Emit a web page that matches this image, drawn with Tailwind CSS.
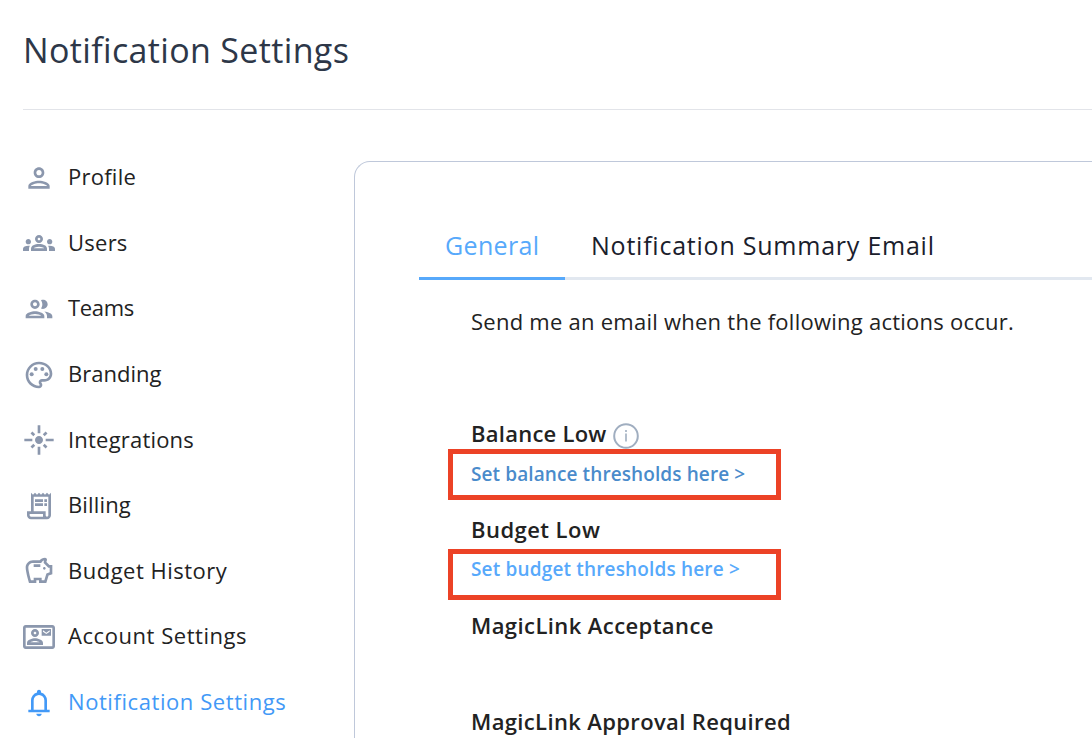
<!DOCTYPE html>
<html lang="en">
<head>
    <meta charset="UTF-8">
    <meta name="viewport" content="width=device-width, initial-scale=1.0">
    <title>Notification Settings</title>
    <script src="https://cdn.jsdelivr.net/npm/@tailwindcss/browser@4"></script>
</head>
<body class="bg-white h-screen flex flex-col overflow-hidden font-['Open_Sans',sans-serif] text-[#222222] whitespace-nowrap">
    <header class="ml-[23px] h-[110px] shrink-0 border-b border-[#e2e4e9] pt-[26px]">
        <h1 class="text-[34px] leading-[48px] tracking-[0.35px] text-[#2d3748]">Notification Settings</h1>
    </header>

    <div class="flex grow">
        <!-- Sidebar -->
        <nav class="w-[354px] shrink-0 pl-[23px] pt-[35px] text-[22px]">
            <a href="#" class="flex items-center gap-[13px] h-[65.6px]">
                <svg class="size-8 shrink-0 fill-[#8b97ad]" viewBox="0 0 24 24"><path d="M12 6c1.1 0 2 .9 2 2s-.9 2-2 2-2-.9-2-2 .9-2 2-2m0 10c2.7 0 5.8 1.29 6 2H6c.23-.72 3.31-2 6-2m0-12C9.79 4 8 5.79 8 8s1.79 4 4 4 4-1.79 4-4-1.79-4-4-4zm0 10c-2.67 0-8 1.34-8 4v2h16v-2c0-2.66-5.33-4-8-4z"/></svg>
                <span class="pb-0.5 tracking-[0.25px]">Profile</span>
            </a>
            <a href="#" class="flex items-center gap-[13px] h-[65.6px]">
                <svg class="size-8 shrink-0 fill-[#8b97ad]" viewBox="0 0 24 24"><path d="M4 13c1.1 0 2-.9 2-2s-.9-2-2-2-2 .9-2 2 .9 2 2 2zm1.13 1.1c-.37-.06-.74-.1-1.13-.1-.99 0-1.93.21-2.78.58C.48 14.9 0 15.62 0 16.43V18h4.5v-1.61c0-.83.23-1.61.63-2.29zM20 13c1.1 0 2-.9 2-2s-.9-2-2-2-2 .9-2 2 .9 2 2 2zm4 3.43c0-.81-.48-1.53-1.22-1.85-.85-.37-1.79-.58-2.78-.58-.39 0-.76.04-1.13.1.4.68.63 1.46.63 2.29V18H24v-1.57zm-7.76-2.78c-1.17-.52-2.61-.9-4.24-.9s-3.07.39-4.24.9C6.68 14.13 6 15.21 6 16.39V18h12v-1.61c0-1.18-.68-2.26-1.76-2.74zM8.07 16c.09-.23.13-.39.91-.69.97-.38 1.99-.56 3.02-.56s2.05.18 3.02.56c.77.3.81.46.91.69H8.07zM12 8c.55 0 1 .45 1 1s-.45 1-1 1-1-.45-1-1 .45-1 1-1m0-2c-1.66 0-3 1.34-3 3s1.34 3 3 3 3-1.34 3-3-1.34-3-3-3z"/></svg>
                <span class="pb-0.5 tracking-[0.25px]">Users</span>
            </a>
            <a href="#" class="flex items-center gap-[13px] h-[65.6px]">
                <svg class="size-8 shrink-0 fill-[#8b97ad]" viewBox="0 0 24 24"><path d="M9 13.75c-2.34 0-7 1.17-7 3.5V19h14v-1.75c0-2.33-4.66-3.5-7-3.5zM4.34 17c.84-.58 2.87-1.25 4.66-1.25s3.82.67 4.66 1.25H4.34zM9 12c1.93 0 3.5-1.57 3.5-3.5S10.93 5 9 5 5.5 6.57 5.5 8.5 7.07 12 9 12zm0-5c.83 0 1.5.67 1.5 1.5S9.83 10 9 10s-1.5-.67-1.5-1.5S8.17 7 9 7zm7.04 6.81c1.16.84 1.96 1.96 1.96 3.44V19h4v-1.75c0-2.02-3.5-3.17-5.96-3.44zM15 12c1.93 0 3.5-1.57 3.5-3.5S16.93 5 15 5c-.54 0-1.04.13-1.5.35.63.89 1 1.98 1 3.15s-.37 2.26-1 3.15c.46.22.96.35 1.5.35z"/></svg>
                <span class="pb-0.5 tracking-[-0.3px]">Teams</span>
            </a>
            <a href="#" class="flex items-center gap-[13px] h-[65.6px]">
                <svg class="size-8 shrink-0 fill-[#8b97ad]" viewBox="0 0 24 24"><path d="M12 22C6.49 22 2 17.51 2 12S6.49 2 12 2s10 4.04 10 9c0 3.31-2.69 6-6 6h-1.77c-.28 0-.5.22-.5.5 0 .12.05.23.13.33.41.47.64 1.06.64 1.67 0 1.38-1.12 2.5-2.5 2.5zm0-18c-4.41 0-8 3.59-8 8s3.59 8 8 8c.28 0 .5-.22.5-.5 0-.16-.08-.28-.14-.35-.41-.46-.63-1.05-.63-1.65 0-1.38 1.12-2.5 2.5-2.5H16c2.21 0 4-1.79 4-4 0-3.86-3.59-7-8-7z"/><circle cx="6.5" cy="11.5" r="1.5"/><circle cx="9.5" cy="7.5" r="1.5"/><circle cx="14.5" cy="7.5" r="1.5"/><circle cx="17.5" cy="11.5" r="1.5"/></svg>
                <span class="pb-0.5">Branding</span>
            </a>
            <a href="#" class="flex items-center gap-[13px] h-[65.6px]">
                <svg class="size-8 shrink-0 fill-[#8b97ad]" viewBox="0 0 24 24"><path d="M7 11H1v2h6v-2zm2.17-3.24L7.05 5.64 5.64 7.05l2.12 2.12 1.41-1.41zM13 1h-2v6h2V1zm5.36 6.05l-1.41-1.41-2.12 2.12 1.41 1.41 2.12-2.12zM17 11v2h6v-2h-6zm-5-2c-1.66 0-3 1.34-3 3s1.34 3 3 3 3-1.34 3-3-1.34-3-3-3zm2.83 7.24l2.12 2.12 1.41-1.41-2.12-2.12-1.41 1.41zm-9.19.71l1.41 1.41 2.12-2.12-1.41-1.41-2.12 2.12zM11 23h2v-6h-2v6z"/></svg>
                <span class="pb-0.5 tracking-[0.2px]">Integrations</span>
            </a>
            <a href="#" class="flex items-center gap-[13px] h-[65.6px]">
                <svg class="size-8 shrink-0 fill-[#8b97ad]" viewBox="0 0 24 24"><path d="M19.5 3.5L18 2l-1.5 1.5L15 2l-1.5 1.5L12 2l-1.5 1.5L9 2 7.5 3.5 6 2v14H3v3c0 1.66 1.34 3 3 3h12c1.66 0 3-1.34 3-3V2l-1.5 1.5zM15 20H6c-.55 0-1-.45-1-1v-1h10v2zm4-1c0 .55-.45 1-1 1s-1-.45-1-1v-3H8V5h11v14zM9 7h6v2H9zm7 0h2v2h-2zm-7 3h6v2H9zm7 0h2v2h-2z"/></svg>
                <span class="pb-0.5 tracking-[0.15px]">Billing</span>
            </a>
            <a href="#" class="flex items-center gap-[13px] h-[65.6px]">
                <svg class="size-8 shrink-0 fill-[#8b97ad]" viewBox="0 0 24 24"><path d="M15 10c0-.55.45-1 1-1s1 .45 1 1-.45 1-1 1-1-.45-1-1zM8 9h5V7H8v2zm14-1.5v6.97l-2.82.94L17.5 21H12v-2h-2v2H4.5S2 12.54 2 9.5C2 6.46 4.46 4 7.5 4h5c.91-1.21 2.36-2 4-2 .83 0 1.5.67 1.5 1.5 0 .21-.04.4-.12.58-.14.34-.26.73-.32 1.15l2.27 2.27H22zm-2 2h-1L15.5 6c0-.65.09-1.29.26-1.91-.97.25-1.76.97-2.09 1.91H7.5C5.57 6 4 7.57 4 9.5c0 1.88 1.22 6.65 2.01 9.5H8v-2h6v2h2.01l1.55-5.15 2.44-.82V9.5z"/></svg>
                <span class="pb-0.5 tracking-[0.5px]">Budget History</span>
            </a>
            <a href="#" class="flex items-center gap-[13px] h-[65.6px]">
                <svg class="size-8 shrink-0 fill-[#8b97ad]" viewBox="0 0 24 24"><path d="M22 3H2C.9 3 0 3.9 0 5v14c0 1.1.9 2 2 2h20c1.1 0 1.99-.9 1.99-2L24 5c0-1.1-.9-2-2-2zm0 16H2V5h20v14zM21 6h-7v5h7V6zm-1 2l-2.5 1.75L15 8V7l2.5 1.75L20 7v1zM9 12c1.65 0 3-1.35 3-3s-1.35-3-3-3-3 1.35-3 3 1.35 3 3 3zm0-4c.55 0 1 .45 1 1s-.45 1-1 1-1-.45-1-1 .45-1 1-1zm6 8.59c0-2.5-3.97-3.58-6-3.58s-6 1.08-6 3.58V18h12v-1.41zM5.48 16c.74-.5 2.22-1 3.52-1s2.77.49 3.52 1H5.48z"/></svg>
                <span class="pb-0.5 tracking-[0.55px]">Account Settings</span>
            </a>
            <a href="#" class="flex items-center gap-[13px] h-[65.6px] text-[#4299f7]">
                <svg class="size-8 shrink-0 fill-current" viewBox="0 0 24 24"><path d="M4 19v-2h2v-7q0-2.075 1.25-3.687T10.5 4.2v-.7q0-.625.438-1.062T12 2t1.063.438T13.5 3.5v.7q2 .5 3.25 2.113T18 10v7h2v2zm8 3q-.825 0-1.412-.587T10 20h4q0 .825-.587 1.413T12 22m-4-5h8v-7q0-1.65-1.175-2.825T12 6 9.175 7.175 8 10z"/></svg>
                <span class="pb-0.5 tracking-[0.57px]">Notification Settings</span>
            </a>
        </nav>

        <!-- Settings card -->
        <main class="mt-[51px] grow border-t border-l border-[#bfc8da] rounded-tl-2xl pl-16 pt-[51px]">
            <div class="flex h-[67px] border-b-3 border-[#e2e8f0] text-[25px] font-medium">
                <a href="#" class="flex items-center h-[67px] w-[146px] pl-[26px] pt-0.5 border-b-3 border-[#57a9fb] tracking-[0.35px] text-[#57a9fb]">General</a>
                <a href="#" class="flex items-center h-16 pl-[26px] pt-0.5 tracking-[0.77px] text-[#1a202c]">Notification Summary Email</a>
            </div>

            <div class="pl-[52px]">
                <p class="mt-[25px] h-28 text-[22px] leading-8 tracking-[0.25px]">Send me an email when the following actions occur.</p>

                <div class="h-24 text-[22px] font-semibold">
                    <div class="flex items-center gap-1.5 h-8">
                        <span class="tracking-[0.25px]">Balance Low</span>
                        <svg class="size-[26px] mt-[5px] fill-none stroke-[#a0aec0]" viewBox="0 0 26 26"><circle cx="13" cy="13" r="11.8" stroke-width="2"/><path d="M13 10.5v8M13 7v2" stroke-width="1.6"/></svg>
                    </div>
                    <a href="#" class="block -ml-[23px] w-[333px] h-[51px] border-5 border-[#ec4226] pl-[18px] text-[19px] leading-10 tracking-[0.1px] text-[#4a8bcb]">Set balance thresholds here &gt;</a>
                </div>

                <div class="h-24 text-[22px] font-semibold">
                    <div class="flex items-center h-8 tracking-[0.45px]">Budget Low</div>
                    <a href="#" class="block -ml-[23px] mt-1 w-[333px] h-[51px] border-5 border-[#ec4226] pl-[18px] text-[19px] leading-[30px] tracking-[0.16px] text-[#57a9fb]">Set budget thresholds here &gt;</a>
                </div>

                <div class="h-24 text-[22px] leading-8 font-semibold tracking-[0.42px]">MagicLink Acceptance</div>
                <div class="h-8 text-[22px] leading-8 font-semibold tracking-[0.36px]">MagicLink Approval Required</div>
            </div>
        </main>
    </div>
</body>
</html>
